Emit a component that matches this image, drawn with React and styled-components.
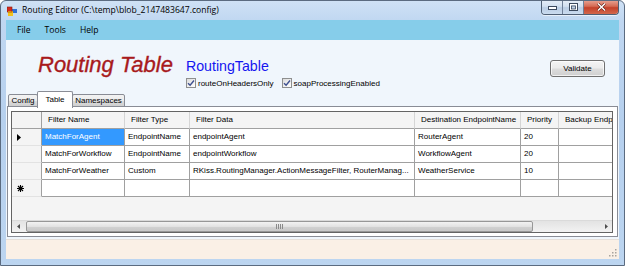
import React from "react";
import styled, { createGlobalStyle } from "styled-components";

const Global = createGlobalStyle`
  html, body { margin: 0; padding: 0; background: #ffffff; }
  body { width: 625px; height: 266px; overflow: hidden; }
  *, *::before, *::after { box-sizing: border-box; }
`;

const Window = styled.div`
  width: 625px;
  height: 266px;
  display: flex;
  flex-direction: column;
  border: 1px solid #5b6b80;
  border-radius: 6px 6px 0 0;
  background: linear-gradient(180deg, #cfe1f5 0px, #c0d7f1 20px, #b6d0ee 120px, #bcd5f0 100%);
  overflow: hidden;
  font-family: "Liberation Sans", Arial, sans-serif;
`;

const TitleBar = styled.div`
  height: 19px;
  flex: none;
  display: flex;
  align-items: flex-start;
  padding: 0 5px 0 6px;
`;

const AppIcon = styled.svg`
  flex: none;
  margin-top: 5px;
`;

const TitleText = styled.div`
  margin-left: 5px;
  font-family: "Open Sans", "Noto Sans", sans-serif;
  font-size: 8.6px;
  line-height: 19px;
  color: #000000;
  white-space: nowrap;
`;

const CaptionButtons = styled.div`
  margin-left: auto;
  margin-top: -1px;
  display: flex;
  height: 15px;
  border: 1px solid #4f5f74;
  border-top: none;
  border-radius: 0 0 4px 4px;
  overflow: hidden;
  box-shadow: 0 1px 0 rgba(255, 255, 255, 0.6);
`;

const CaptionButton = styled.div`
  width: ${(p) => p.$w}px;
  height: 100%;
  display: flex;
  align-items: center;
  justify-content: center;
  background: ${(p) =>
    p.$close
      ? "linear-gradient(180deg, #e9a797 0%, #d56a54 45%, #c4412a 55%, #d2674c 100%)"
      : "linear-gradient(180deg, #e6eef8 0%, #d2e0f0 45%, #bacde4 55%, #cadcef 100%)"};
  & + & {
    border-left: 1px solid #6f8098;
  }
`;

const Body = styled.div`
  flex: 1;
  display: flex;
  flex-direction: column;
  padding: 0 5px 6px 5px;
  min-height: 0;
`;

const Client = styled.div`
  flex: 1;
  display: flex;
  flex-direction: column;
  background: #f0f6fc;
  min-height: 0;
`;

const MenuBar = styled.div`
  height: 20px;
  flex: none;
  display: flex;
  align-items: center;
  padding-left: 4px;
  background: #86cdea;
`;

const MenuItem = styled.div`
  padding: 0 7px;
  font-family: "Open Sans", "Noto Sans", sans-serif;
  font-size: 8.6px;
  color: #000000;
`;

const Content = styled.div`
  flex: 1;
  display: flex;
  flex-direction: column;
  padding: 0 1px 2px 1px;
  min-height: 0;
`;

const Header = styled.div`
  height: 51px;
  flex: none;
  display: flex;
  align-items: flex-start;
  padding: 0 13px 0 31px;
`;

const BigTitle = styled.div`
  margin-top: 14px;
  font-family: "Liberation Sans", Arial, sans-serif;
  font-style: italic;
  font-size: 22px;
  line-height: 22px;
  color: #a81a1c;
  white-space: nowrap;
  -webkit-text-stroke: 0.35px #a81a1c;
`;

const InfoColumn = styled.div`
  margin-left: 13px;
  margin-top: 19px;
  display: flex;
  flex-direction: column;
`;

const SubTitle = styled.div`
  font-size: 14.2px;
  line-height: 14px;
  color: #1515f0;
  white-space: nowrap;
`;

const CheckRow = styled.div`
  margin-top: 4px;
  display: flex;
  align-items: center;
  height: 12px;
  gap: 8px;
`;

const CheckItem = styled.label`
  display: flex;
  align-items: center;
  gap: 2px;
  font-size: 8px;
  color: #000000;
  white-space: nowrap;
`;

const CheckBox = styled.span`
  width: 10px;
  height: 10px;
  border: 1px solid #8e8f8f;
  background: linear-gradient(135deg, #dcdcdc, #ffffff);
  display: flex;
  align-items: center;
  justify-content: center;
`;

const Spacer = styled.div`
  flex: 1;
`;

const Button = styled.div`
  margin-top: 20px;
  width: 55px;
  height: 17px;
  border: 1px solid #707070;
  border-radius: 3px;
  background: linear-gradient(180deg, #f4f4f4 0%, #ebebeb 48%, #dddddd 52%, #cfcfcf 100%);
  box-shadow: inset 0 0 0 1px rgba(255, 255, 255, 0.7);
  display: flex;
  align-items: center;
  justify-content: center;
  font-size: 8px;
  color: #000000;
`;

const TabStrip = styled.div`
  height: 16px;
  flex: none;
  display: flex;
  align-items: flex-end;
  padding-left: 1px;
  position: relative;
  z-index: 2;
`;

const Tab = styled.div`
  position: relative;
  width: ${(p) => p.$w}px;
  height: ${(p) => (p.$active ? 17 : 13)}px;
  margin-left: ${(p) => (p.$first ? 0 : -1)}px;
  margin-bottom: ${(p) => (p.$active ? -1 : 0)}px;
  border: 1px solid #898c95;
  border-bottom: ${(p) => (p.$active ? "none" : "1px solid #898c95")};
  border-radius: 2px 2px 0 0;
  background: ${(p) =>
    p.$active ? "#ffffff" : "linear-gradient(180deg, #f3f3f3 0%, #ebebeb 50%, #dddddd 51%, #cfcfcf 100%)"};
  z-index: ${(p) => (p.$active ? 3 : 1)};
  display: flex;
  align-items: center;
  justify-content: center;
  padding-bottom: ${(p) => (p.$active ? 2 : 0)}px;
  font-size: 8px;
  color: #000000;
  white-space: nowrap;
`;

const TabPage = styled.div`
  flex: 1;
  margin-top: -1px;
  border: 1px solid #898c95;
  background: #ffffff;
  padding: 4px 4px 3px 3px;
  display: flex;
  min-height: 0;
`;

const Grid = styled.div`
  flex: 1;
  display: flex;
  flex-direction: column;
  border: 1px solid #646464;
  background: #f4f4f4;
  overflow: hidden;
  min-width: 0;
`;

const RowsArea = styled.div`
  flex: 1;
  overflow: hidden;
`;

const GridRow = styled.div`
  display: grid;
  grid-template-columns: 30px 83px 65px 225px 106px 38px 80px;
  height: 17px;
`;

const Cell = styled.div`
  height: 17px;
  padding-left: ${(p) => (p.$head ? 6 : 3)}px;
  font-size: 8px;
  line-height: 16px;
  white-space: nowrap;
  overflow: hidden;
  color: ${(p) => (p.$selected ? "#ffffff" : "#000000")};
  background: ${(p) => (p.$selected ? "#3399ff" : p.$head ? "#f4f4f4" : "#ffffff")};
  border-right: 1px solid ${(p) => (p.$head ? "#d5d5d5" : "#a0a0a0")};
  border-bottom: 1px solid #a0a0a0;
`;

const RowHeadCell = styled.div`
  height: 17px;
  background: #f4f4f4;
  border-right: 1px solid #a0a0a0;
  border-bottom: 1px solid ${(p) => (p.$corner ? "#a0a0a0" : "#e2e2e2")};
  display: flex;
  align-items: center;
  padding-left: 5px;
`;

const HScroll = styled.div`
  height: 12px;
  flex: none;
  display: flex;
  background: linear-gradient(180deg, #e3e3e3, #f2f2f2);
  border-top: 1px solid #dadada;
`;

const ScrollArrow = styled.div`
  width: ${(p) => p.$w}px;
  flex: none;
  display: flex;
  align-items: center;
  justify-content: center;
`;

const Thumb = styled.div`
  width: 507px;
  margin: 0 1px;
  border: 1px solid #979797;
  border-radius: 2px;
  background: linear-gradient(180deg, #f2f2f2 0%, #e2e2e2 50%, #d2d2d2 51%, #c8c8c8 100%);
  display: flex;
  align-items: center;
  justify-content: center;
`;

const StatusBar = styled.div`
  height: 20px;
  flex: none;
  background: #faf0e6;
  border-top: 1px solid #e6e0da;
  display: flex;
  justify-content: flex-end;
  align-items: flex-end;
  padding: 0 2px 2px 0;
`;

const columns = [
  "Filter Name",
  "Filter Type",
  "Filter Data",
  "Destination EndpointName",
  "Priority",
  "Backup Endp",
];

const rows = [
  ["MatchForAgent", "EndpointName", "endpointAgent", "RouterAgent", "20", ""],
  ["MatchForWorkflow", "EndpointName", "endpointWorkflow", "WorkflowAgent", "20", ""],
  [
    "MatchForWeather",
    "Custom",
    "RKiss.RoutingManager.ActionMessageFilter, RouterManag...",
    "WeatherService",
    "10",
    "",
  ],
  ["", "", "", "", "", ""],
];

const Check = () => (
  <CheckBox>
    <svg width="8" height="8" viewBox="0 0 8 8">
      <path d="M1 4.2 L3.1 6.3 L7 1.5" fill="none" stroke="#3f5190" strokeWidth="1.4" />
    </svg>
  </CheckBox>
);

const Pointer = () => (
  <svg width="4" height="7" viewBox="0 0 4 7">
    <path d="M0 0 L4 3.5 L0 7 Z" fill="#000" />
  </svg>
);

const NewRowMark = () => (
  <svg width="7" height="7" viewBox="0 0 7 7">
    <path d="M3.5 0 V7 M0 3.5 H7 M1 1 L6 6 M6 1 L1 6" stroke="#000" strokeWidth="1.1" />
  </svg>
);

export default function App() {
  return (
    <>
      <Global />
      <Window>
        <TitleBar>
          <AppIcon width="10" height="10" viewBox="0 0 10 10">
            <rect x="0" y="1" width="5" height="5" fill="#d42a1c" />
            <rect x="5" y="3" width="5" height="4" fill="#2e6fd6" />
            <rect x="1" y="5" width="5" height="5" fill="#f2c21b" />
            <rect x="0" y="1" width="5" height="5" fill="none" stroke="#8a1a10" strokeWidth="0.6" />
          </AppIcon>
          <TitleText>Routing Editor (C:\temp\blob_2147483647.config)</TitleText>
          <CaptionButtons>
            <CaptionButton $w={20}>
              <svg width="9" height="5" viewBox="0 0 9 5">
                <rect x="0.5" y="1.5" width="8" height="3" fill="#fff" stroke="#3c4a5e" strokeWidth="1" />
              </svg>
            </CaptionButton>
            <CaptionButton $w={21}>
              <svg width="9" height="8" viewBox="0 0 9 8">
                <rect x="0.5" y="0.5" width="8" height="7" fill="none" stroke="#3c4a5e" strokeWidth="1" />
                <rect x="1.5" y="1.5" width="6" height="5" fill="none" stroke="#fff" strokeWidth="1" />
                <rect x="2.5" y="3" width="4" height="3" fill="none" stroke="#3c4a5e" strokeWidth="0.8" />
              </svg>
            </CaptionButton>
            <CaptionButton $w={35} $close>
              <svg width="9" height="8" viewBox="0 0 9 8">
                <path d="M1 0.5 L8 7.5 M8 0.5 L1 7.5" stroke="#5a1a12" strokeWidth="2.6" />
                <path d="M1 0.5 L8 7.5 M8 0.5 L1 7.5" stroke="#ffffff" strokeWidth="1.5" />
              </svg>
            </CaptionButton>
          </CaptionButtons>
        </TitleBar>
        <Body>
          <Client>
            <MenuBar>
              <MenuItem>File</MenuItem>
              <MenuItem>Tools</MenuItem>
              <MenuItem>Help</MenuItem>
            </MenuBar>
            <Content>
              <Header>
                <BigTitle>Routing Table</BigTitle>
                <InfoColumn>
                  <SubTitle>RoutingTable</SubTitle>
                  <CheckRow>
                    <CheckItem>
                      <Check />
                      routeOnHeadersOnly
                    </CheckItem>
                    <CheckItem>
                      <Check />
                      soapProcessingEnabled
                    </CheckItem>
                  </CheckRow>
                </InfoColumn>
                <Spacer />
                <Button>Validate</Button>
              </Header>
              <TabStrip>
                <Tab $first $w={30}>Config</Tab>
                <Tab $active $w={36}>Table</Tab>
                <Tab $w={53}>Namespaces</Tab>
              </TabStrip>
              <TabPage>
                <Grid>
                  <RowsArea>
                    <GridRow>
                      <RowHeadCell $corner />
                      {columns.map((c) => (
                        <Cell key={c} $head>
                          {c}
                        </Cell>
                      ))}
                    </GridRow>
                    {rows.map((r, i) => (
                      <GridRow key={i}>
                        <RowHeadCell>
                          {i === 0 && <Pointer />}
                          {i === rows.length - 1 && <NewRowMark />}
                        </RowHeadCell>
                        {r.map((v, j) => (
                          <Cell key={j} $selected={i === 0 && j === 0}>
                            {v}
                          </Cell>
                        ))}
                      </GridRow>
                    ))}
                  </RowsArea>
                  <HScroll>
                    <ScrollArrow $w={13}>
                      <svg width="3" height="5" viewBox="0 0 3 5">
                        <path d="M3 0 L0 2.5 L3 5 Z" fill="#4d4d4d" />
                      </svg>
                    </ScrollArrow>
                    <Thumb>
                      <svg width="7" height="5" viewBox="0 0 7 5">
                        <path d="M0.5 0 V5 M2.5 0 V5 M4.5 0 V5 M6.5 0 V5" stroke="#8a8a8a" strokeWidth="1" />
                      </svg>
                    </Thumb>
                    <Spacer />
                    <ScrollArrow $w={12}>
                      <svg width="3" height="5" viewBox="0 0 3 5">
                        <path d="M0 0 L3 2.5 L0 5 Z" fill="#4d4d4d" />
                      </svg>
                    </ScrollArrow>
                  </HScroll>
                </Grid>
              </TabPage>
            </Content>
            <StatusBar>
              <svg width="8" height="8" viewBox="0 0 8 8">
                <g fill="#a8a49e">
                  <rect x="6" y="0" width="1.5" height="1.5" />
                  <rect x="3" y="3" width="1.5" height="1.5" />
                  <rect x="6" y="3" width="1.5" height="1.5" />
                  <rect x="0" y="6" width="1.5" height="1.5" />
                  <rect x="3" y="6" width="1.5" height="1.5" />
                  <rect x="6" y="6" width="1.5" height="1.5" />
                </g>
              </svg>
            </StatusBar>
          </Client>
        </Body>
      </Window>
    </>
  );
}
